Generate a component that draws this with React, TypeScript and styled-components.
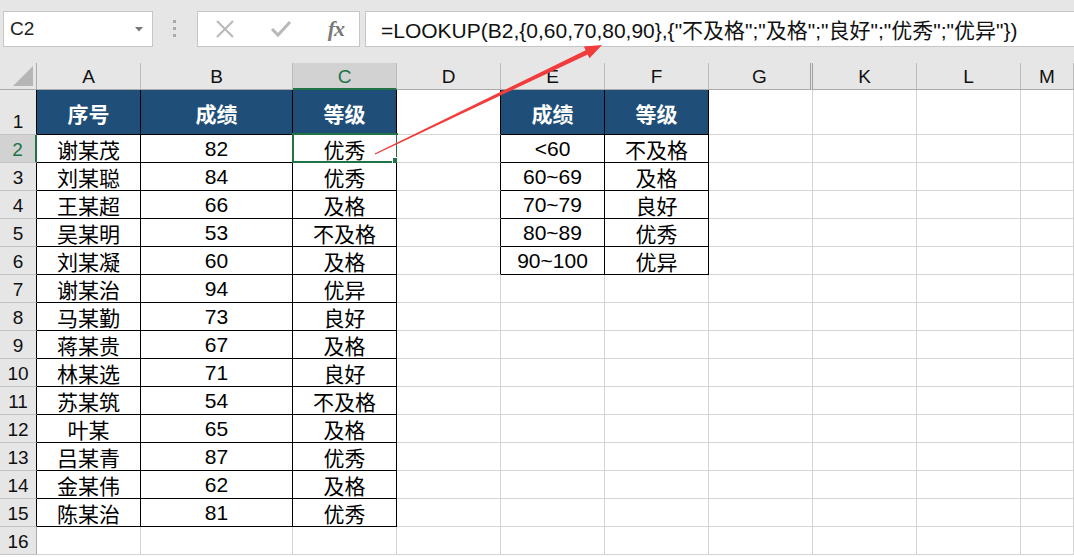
import React from "react";
import styled, { createGlobalStyle } from "styled-components";

// grid + selection colours, taken from the excel-ish screenshot
const GRID = "#d4d4d4";
const HEAD_BG = "#e6e6e6";
const SEL_HEAD_BG = "#d2d2d2";
const XL_GREEN = "#217346";
const TABLE_BLUE = "#1f4e78";

const GlobalStyle = createGlobalStyle`
  html, body {
    margin: 0;
    padding: 0;
    background: #fff;
    overflow: hidden;
  }
  body {
    font-family: "Liberation Sans", "Noto Sans CJK SC", sans-serif;
  }
`;

const Page = styled.div`
  position: relative;
  width: 100vw;
  height: 100vh;
  overflow: hidden;
  background: #fff;
`;

const TopBar = styled.div`
  display: flex;
  align-items: flex-start;
  height: 63px;
  box-sizing: border-box;
  padding-top: 11px;
  background: ${HEAD_BG};
`;

const NameBox = styled.div`
  display: flex;
  align-items: center;
  justify-content: space-between;
  width: 150px;
  height: 36px;
  margin-left: 3px;
  box-sizing: border-box;
  padding: 0 9px 0 6px;
  background: #fff;
  border: 1px solid #c6c6c6;
  font-size: 19px;
  color: #222;
`;

const Dots = styled.div`
  display: flex;
  flex-direction: column;
  gap: 4px;
  margin: 9px 21px 0 20px;

  span {
    width: 3px;
    height: 3px;
    background: #a9a9a9;
  }
`;

const FxBox = styled.div`
  display: flex;
  align-items: center;
  width: 163px;
  height: 36px;
  box-sizing: border-box;
  padding: 0 15px 0 17px;
  justify-content: space-between;
  background: #fff;
  border: 1px solid #c6c6c6;
`;

const FxLabel = styled.span`
  font-family: "Liberation Serif", serif;
  font-style: italic;
  font-weight: bold;
  font-size: 22px;
  color: #7a7a7a;
  letter-spacing: -1px;
`;

const FormulaBox = styled.div`
  flex: 1;
  height: 36px;
  margin-left: 5px;
  box-sizing: border-box;
  display: flex;
  align-items: center;
  padding-left: 15px;
  background: #fff;
  border: 1px solid #c6c6c6;
  border-right: none;
  font-size: 21px;
  color: #111;
  white-space: nowrap;
`;

const Sheet = styled.div`
  display: grid;
  grid-template-columns: 37px 104px 152px repeat(7, 104px) 1fr;
  grid-template-rows: 27px 45px repeat(16, 28px);
`;

const Corner = styled.div`
  position: relative;
  background: ${HEAD_BG};
  border-right: 1px solid #ababab;
  border-bottom: 1px solid #ababab;
  box-sizing: border-box;
`;

const ColHead = styled.div<{ $sel?: boolean; $double?: boolean }>`
  display: flex;
  align-items: center;
  justify-content: center;
  box-sizing: border-box;
  padding-top: 2px;
  background: ${(p) => (p.$sel ? SEL_HEAD_BG : HEAD_BG)};
  color: ${(p) => (p.$sel ? XL_GREEN : "#111")};
  border-right: ${(p) => (p.$double ? "3px double #9f9f9f" : "1px solid #bcbcbc")};
  border-bottom: ${(p) => (p.$sel ? `2px solid ${XL_GREEN}` : "1px solid #ababab")};
  font-size: 19px;
`;

const RowHead = styled.div<{ $sel?: boolean; $edge: string }>`
  display: flex;
  align-items: flex-end;
  justify-content: center;
  box-sizing: border-box;
  padding-bottom: 1px;
  background: ${(p) => (p.$sel ? SEL_HEAD_BG : HEAD_BG)};
  color: ${(p) => (p.$sel ? XL_GREEN : "#111")};
  border-right: ${(p) => (p.$sel ? `2px solid ${XL_GREEN}` : `1px solid ${p.$edge}`)};
  border-bottom: 1px solid #c4c4c4;
  font-size: 19px;
`;

const Cell = styled.div<{ $rb: string; $bb: string; $head?: boolean }>`
  position: relative;
  display: flex;
  align-items: center;
  justify-content: center;
  box-sizing: border-box;
  padding-top: 1px;
  background: ${(p) => (p.$head ? TABLE_BLUE : "#fff")};
  color: ${(p) => (p.$head ? "#fff" : "#000")};
  font-weight: ${(p) => (p.$head ? "bold" : "normal")};
  border-right: 1px solid ${(p) => p.$rb};
  border-bottom: 1px solid ${(p) => p.$bb};
  font-size: 21px;
  white-space: nowrap;
`;

const Selection = styled.div`
  position: absolute;
  top: -2px;
  left: -1px;
  right: -2px;
  bottom: -1px;
  border: 2px solid ${XL_GREEN};
  pointer-events: none;
`;

const FillHandle = styled.div`
  position: absolute;
  right: -5px;
  bottom: -5px;
  width: 7px;
  height: 7px;
  background: ${XL_GREEN};
  border: 1px solid #fff;
`;

const Arrow = styled.svg`
  position: absolute;
  left: 0;
  top: 0;
  pointer-events: none;
`;

const COLS = ["A", "B", "C", "D", "E", "F", "G", "K", "L", "M"];

const students: [string, number, string][] = [
  ["谢某茂", 82, "优秀"],
  ["刘某聪", 84, "优秀"],
  ["王某超", 66, "及格"],
  ["吴某明", 53, "不及格"],
  ["刘某凝", 60, "及格"],
  ["谢某治", 94, "优异"],
  ["马某勤", 73, "良好"],
  ["蒋某贵", 67, "及格"],
  ["林某选", 71, "良好"],
  ["苏某筑", 54, "不及格"],
  ["叶某", 65, "及格"],
  ["吕某青", 87, "优秀"],
  ["金某伟", 62, "及格"],
  ["陈某治", 81, "优秀"],
];

const grades: [string, string][] = [
  ["<60", "不及格"],
  ["60~69", "及格"],
  ["70~79", "良好"],
  ["80~89", "优秀"],
  ["90~100", "优异"],
];

// rows 1..16, one string per column
const rows: string[][] = [];
rows.push(["序号", "成绩", "等级", "", "成绩", "等级", "", "", "", ""]);
for (let i = 0; i < 15; i++) {
  const s = students[i];
  const g = grades[i];
  rows.push([
    s ? s[0] : "",
    s ? String(s[1]) : "",
    s ? s[2] : "",
    "",
    g ? g[0] : "",
    g ? g[1] : "",
    "",
    "",
    "",
    "",
  ]);
}

// is (row, col) inside one of the two bordered tables
const inTable = (r: number, c: number) =>
  (r >= 1 && r <= 15 && c >= 0 && c <= 2) || (r >= 1 && r <= 6 && c >= 4 && c <= 5);

const FORMULA = '=LOOKUP(B2,{0,60,70,80,90},{"不及格";"及格";"良好";"优秀";"优异"})';

function arrowPoints() {
  const x0 = 375, y0 = 154, x1 = 602, y1 = 45;
  const len = Math.hypot(x1 - x0, y1 - y0);
  const dx = (x1 - x0) / len, dy = (y1 - y0) / len;
  const nx = -dy, ny = dx;
  const bx = x1 - dx * 17, by = y1 - dy * 17;
  const pts = [
    [x0 + nx * 0.6, y0 + ny * 0.6],
    [bx + nx * 2.3, by + ny * 2.3],
    [bx + nx * 6.5, by + ny * 6.5],
    [x1, y1],
    [bx - nx * 6.5, by - ny * 6.5],
    [bx - nx * 2.3, by - ny * 2.3],
    [x0 - nx * 0.6, y0 - ny * 0.6],
  ];
  return pts.map((p) => p.map((v) => v.toFixed(1)).join(",")).join(" ");
}

export default function App() {
  return (
    <Page>
      <GlobalStyle />
      <TopBar>
        <NameBox>
          <span>C2</span>
          <svg width="8" height="5" viewBox="0 0 8 5">
            <path d="M0 0h8L4 4.5z" fill="#777" />
          </svg>
        </NameBox>
        <Dots>
          <span />
          <span />
          <span />
        </Dots>
        <FxBox>
          <svg width="20" height="20" viewBox="0 0 20 20">
            <path d="M2 2L18 18M18 2L2 18" stroke="#b8b8b8" strokeWidth="2" />
          </svg>
          <svg width="22" height="18" viewBox="0 0 22 18">
            <path d="M2 9l6 6L20 2" stroke="#b8b8b8" strokeWidth="3" fill="none" />
          </svg>
          <FxLabel>fx</FxLabel>
        </FxBox>
        <FormulaBox>{FORMULA}</FormulaBox>
      </TopBar>

      <Sheet>
        <Corner>
          <svg width="20" height="20" viewBox="0 0 20 20" style={{ position: "absolute", right: 3, bottom: 3 }}>
            <path d="M20 0V20H0z" fill="#b6b6b6" />
          </svg>
        </Corner>
        {COLS.map((c) => (
          <ColHead key={c} $sel={c === "C"} $double={c === "G"}>
            {c}
          </ColHead>
        ))}

        {rows.map((row, ri) => {
          const r = ri + 1;
          return (
            <React.Fragment key={r}>
              <RowHead $sel={r === 2} $edge={inTable(r, 0) ? "#000" : "#ababab"}>
                {r}
              </RowHead>
              {row.map((v, c) => {
                const rb = inTable(r, c) || inTable(r, c + 1) ? "#000" : GRID;
                const bb = inTable(r, c) || inTable(r + 1, c) ? "#000" : GRID;
                return (
                  <Cell key={c} $rb={rb} $bb={bb} $head={r === 1 && inTable(r, c)}>
                    {v}
                    {r === 2 && c === 2 && (
                      <Selection>
                        <FillHandle />
                      </Selection>
                    )}
                  </Cell>
                );
              })}
            </React.Fragment>
          );
        })}
      </Sheet>

      <Arrow width="1074" height="557" viewBox="0 0 1074 557">
        <polygon points={arrowPoints()} fill="#f23c3c" />
      </Arrow>
    </Page>
  );
}
